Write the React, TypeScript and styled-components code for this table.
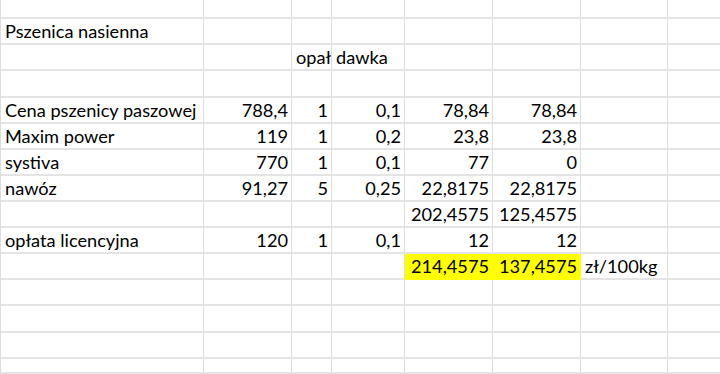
import React from "react";
import styled, { createGlobalStyle } from "styled-components";

const GlobalStyle = createGlobalStyle`
  html, body {
    margin: 0;
    padding: 0;
    background: #ffffff;
    overflow: hidden;
  }
`;

const columns = [203, 88, 40, 73, 88, 88, 87, 53];
const rows = [19, 26, 26, 27, 26, 26, 26, 26, 26, 26, 26, 26, 27, 26, 15];

const Sheet = styled.div`
  display: grid;
  grid-template-columns: ${columns.map((c) => `${c}px`).join(" ")};
  grid-template-rows: ${rows.map((r) => `${r}px`).join(" ")};
  width: 720px;
  height: 374px;
  overflow: hidden;
  border-left: 1px solid #dcdcdc;
  box-sizing: border-box;
  font-family: Lato, "Open Sans", sans-serif;
  font-size: 18.2px;
  color: #000;
`;

const Cell = styled.div<{ $align?: "left" | "right"; $fill?: string; $spill?: boolean }>`
  box-sizing: border-box;
  border-right: 1px solid ${(p) => p.$fill || "#dedede"};
  border-bottom: 2px solid ${(p) => p.$fill || "#e4e4e4"};
  background: ${(p) => p.$fill || "transparent"};
  padding: 0 3px 1px 4px;
  display: flex;
  align-items: flex-end;
  justify-content: ${(p) => (p.$align === "right" ? "flex-end" : "flex-start")};
  white-space: nowrap;
  overflow: ${(p) => (p.$spill ? "visible" : "hidden")};
  line-height: 21px;
`;

type Row = (string | { v: string; left?: boolean; fill?: string; spill?: boolean })[];

const data: Row[] = [
  [],
  [{ v: "Pszenica nasienna", left: true, spill: true }],
  ["", "", { v: "opał", left: true }, { v: "dawka", left: true, spill: true }],
  [],
  [{ v: "Cena pszenicy paszowej", left: true }, "788,4", "1", "0,1", "78,84", "78,84"],
  [{ v: "Maxim power", left: true }, "119", "1", "0,2", "23,8", "23,8"],
  [{ v: "systiva", left: true }, "770", "1", "0,1", "77", "0"],
  [{ v: "nawóz", left: true }, "91,27", "5", "0,25", "22,8175", "22,8175"],
  ["", "", "", "", "202,4575", "125,4575"],
  [{ v: "opłata licencyjna", left: true }, "120", "1", "0,1", "12", "12"],
  [
    "",
    "",
    "",
    "",
    { v: "214,4575", fill: "#ffff00" },
    { v: "137,4575", fill: "#ffff00" },
    { v: "zł/100kg", left: true, spill: true },
  ],
  [],
  [],
  [],
  [],
];

export default function App() {
  return (
    <>
      <GlobalStyle />
      <Sheet>
        {data.map((row, r) =>
          columns.map((_, c) => {
            const item = row[c];
            if (item === undefined || item === "") return <Cell key={`${r}-${c}`} />;
            if (typeof item === "string")
              return (
                <Cell key={`${r}-${c}`} $align="right">
                  {item}
                </Cell>
              );
            return (
              <Cell
                key={`${r}-${c}`}
                $align={item.left ? "left" : "right"}
                $fill={item.fill}
                $spill={item.spill}
              >
                {item.v}
              </Cell>
            );
          })
        )}
      </Sheet>
    </>
  );
}
